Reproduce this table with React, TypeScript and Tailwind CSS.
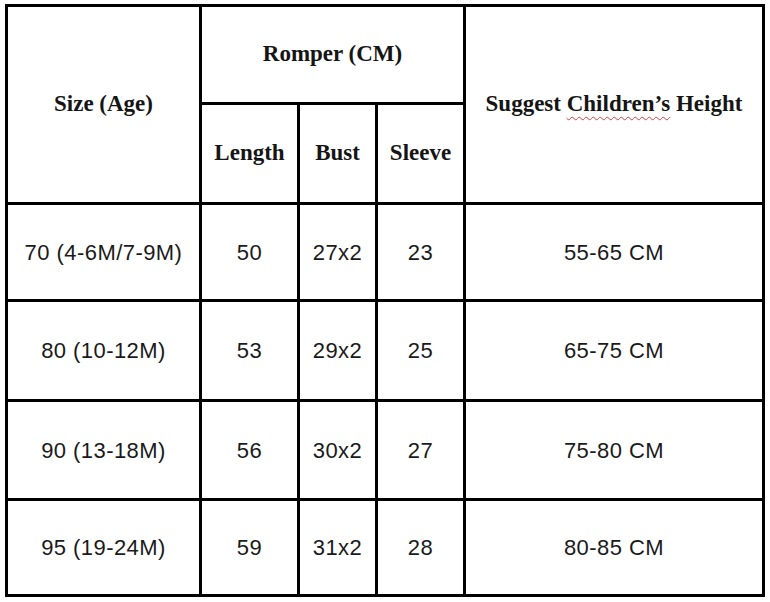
const rows = [
  { size: "70 (4-6M/7-9M)", length: "50", bust: "27x2", sleeve: "23", height: "55-65 CM" },
  { size: "80 (10-12M)", length: "53", bust: "29x2", sleeve: "25", height: "65-75 CM" },
  { size: "90 (13-18M)", length: "56", bust: "30x2", sleeve: "27", height: "75-80 CM" },
  { size: "95 (19-24M)", length: "59", bust: "31x2", sleeve: "28", height: "80-85 CM" },
];

const headCell =
  "flex items-center justify-center bg-white text-[23px] font-bold text-[#151515] font-['Liberation_Serif','Times_New_Roman',serif]";
const bodyCell =
  "flex items-center justify-center bg-white text-[22px] tracking-[0.02em] text-[#1a1a1a] font-['Liberation_Sans',Arial,sans-serif]";

export default function App() {
  return (
    <div className="min-h-screen bg-white pl-[5px] pt-[4px]">
      <div className="grid w-fit grid-cols-[191px_95px_75px_85px_296px] grid-rows-[95px_97px_94px_97px_96px_93px] gap-[3px] bg-black p-[3px]">
        <div className={`${headCell} row-span-2`}>Size (Age)</div>
        <div className={`${headCell} col-span-3`}>Romper (CM)</div>
        <div className={`${headCell} row-span-2`}>
          <span>
            Suggest{" "}
            <span className="underline decoration-wavy decoration-[#d04040] decoration-1 underline-offset-[5px]">
              Children’s
            </span>{" "}
            Height
          </span>
        </div>
        <div className={headCell}>Length</div>
        <div className={headCell}>Bust</div>
        <div className={headCell}>Sleeve</div>

        {rows.map((r) => (
          <div key={r.size} className="contents">
            <div className={bodyCell}>{r.size}</div>
            <div className={bodyCell}>{r.length}</div>
            <div className={bodyCell}>{r.bust}</div>
            <div className={bodyCell}>{r.sleeve}</div>
            <div className={bodyCell}>{r.height}</div>
          </div>
        ))}
      </div>
    </div>
  );
}
